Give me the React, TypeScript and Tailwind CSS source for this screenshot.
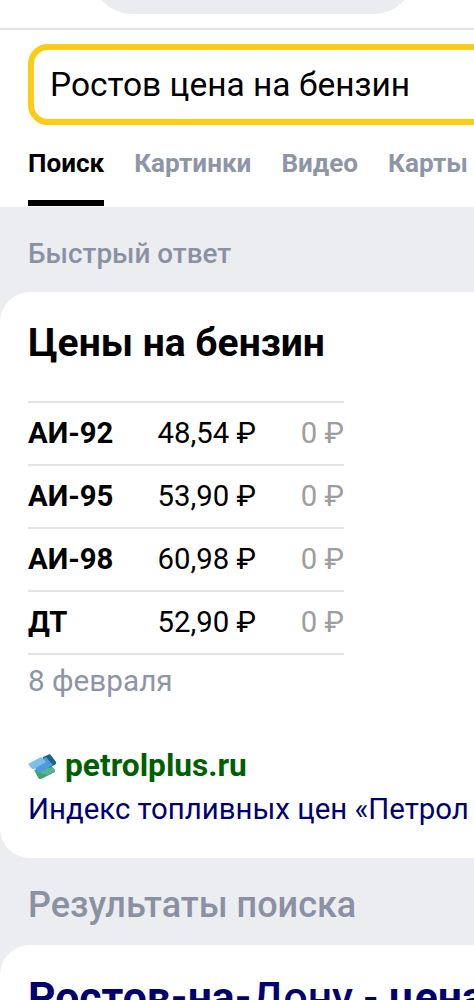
const tabs = ["Поиск", "Картинки", "Видео", "Карты"];

const prices = [
  { fuel: "АИ-92", price: "48,54 ₽", diff: "0 ₽" },
  { fuel: "АИ-95", price: "53,90 ₽", diff: "0 ₽" },
  { fuel: "АИ-98", price: "60,98 ₽", diff: "0 ₽" },
  { fuel: "ДТ", price: "52,90 ₽", diff: "0 ₽" },
];

function PetrolIcon() {
  return (
    <svg width="29" height="25" viewBox="0 0 29 25" className="shrink-0">
      <path d="M6 16 22 11 27 16 27 18 13 25 11 25Z" fill="#3fa468" />
      <path d="M14 16 23 11 27 17 19 21 12 19Z" fill="#57b58c" />
      <path d="M15 3 22 0 28 8 28 10 21 14 14 7Z" fill="#17638f" />
      <path d="M5 10 18 3 25 11 12 19 10 19Z" fill="#4e9bdc" />
      <path d="M0 10 13 3 18 8 6 15 4 15Z" fill="#7cc0ea" />
    </svg>
  );
}

function PriceTable() {
  return (
    <div className="w-[316px] border-t-2 border-[#e4e4e4]">
      {prices.map((row) => (
        <div
          key={row.fuel}
          className="flex h-[63px] items-center border-b-2 border-[#e4e4e4] text-[29.3px] leading-[35px] whitespace-nowrap"
        >
          <span className="w-[129.5px] font-bold">{row.fuel}</span>
          <span className="flex-1">{row.price}</span>
          <span className="text-[#9e9e9e]">{row.diff}</span>
        </div>
      ))}
    </div>
  );
}

export default function App() {
  return (
    <div className="h-[1000px] w-full overflow-hidden bg-[#ecedf1] font-['Roboto','Liberation_Sans',sans-serif] text-black">
      <header className="h-[207px] bg-white">
        <div className="flex h-[30px] items-start justify-center border-b-2 border-[#e3e3e6] pl-8">
          <div className="h-[14px] w-[322px] overflow-hidden">
            <div className="-mt-[66px] h-20 rounded-[40px] bg-[#ebecef]" />
          </div>
        </div>

        <div className="pt-[14px] pl-7">
          <div className="flex h-[81px] w-[520px] items-center rounded-[20px] border-6 border-[#facc15] pl-4 text-[33.5px] leading-[40px] whitespace-nowrap">
            Ростов цена на бензин
          </div>
        </div>

        <nav className="flex gap-[30px] pl-7 text-[26.1px] leading-[32px] font-bold whitespace-nowrap">
          {tabs.map((tab, i) => (
            <a
              key={tab}
              className={
                i === 0
                  ? "h-[81px] border-b-6 border-black pt-[22px]"
                  : "h-[81px] pt-[22px] text-[#8e95a5]"
              }
            >
              {tab}
            </a>
          ))}
        </nav>
      </header>

      <h2 className="h-[85px] pt-[31px] pl-7 text-[27.9px] leading-[32px] font-medium text-[#8b91a3]">
        Быстрый ответ
      </h2>

      <section className="h-[566px] rounded-l-[30px] bg-white pt-[29px] pl-7 whitespace-nowrap">
        <h1 className="mb-[36px] text-[39px] leading-[44px] font-bold">Цены на бензин</h1>
        <PriceTable />
        <p className="mt-[8px] text-[29.7px] leading-[36px] text-[#8e95a5]">8 февраля</p>
        <div className="mt-[49px] flex items-center gap-2 text-[31.7px] leading-[36px] font-bold text-[#006000]">
          <PetrolIcon />
          <span>petrolplus.ru</span>
        </div>
        <p className="mt-[7px] text-[29.4px] leading-[36px] text-[#000070]">
          Индекс топливных цен «Петрол
        </p>
      </section>

      <h2 className="h-[87px] pt-[25px] pl-7 text-[36px] leading-[44px] font-medium text-[#8b91a3]">
        Результаты поиска
      </h2>

      <section className="h-[120px] rounded-tl-[30px] bg-white pt-[30px] pl-7 text-[42.7px] leading-[44px] font-medium whitespace-nowrap text-[#000070]">
        <b className="font-bold">Ростов-на-</b>Дону - <b className="font-bold">цена</b>
      </section>
    </div>
  );
}
